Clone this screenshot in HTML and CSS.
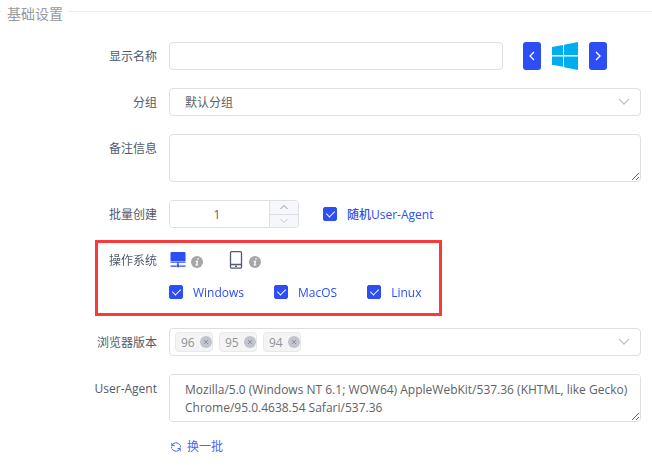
FILE: index.html
```html
<!DOCTYPE html>
<html lang="zh-CN">
<head>
    <meta charset="UTF-8">
    <meta name="viewport" content="width=device-width, initial-scale=1.0">
    <title>基础设置</title>
    <link rel="stylesheet" href="styles.css">
</head>
<body>
    <form>
        <fieldset class="panel">
            <legend>基础设置</legend>
            <div class="form-item">
                <label class="label" for="name">显示名称</label>
                <div class="content name-row">
                    <input class="input" id="name" type="text">
                    <div class="icon-picker">
                        <button class="btn" type="button" aria-label="上一个">
                            <svg width="8" height="12" viewBox="0 0 8 12"><path d="M6 2L2 6l4 4"/></svg>
                        </button>
                        <svg class="win-logo" width="26" height="28" viewBox="0 0 26 28">
                            <path d="M0 5l11-2v10H0zM12 2.800L26 0v13H12zM0 14.500h11v10.200L0 22.800zM12 14.500h14V28l-14-2.800z"/>
                        </svg>
                        <button class="btn" type="button" aria-label="下一个">
                            <svg width="8" height="12" viewBox="0 0 8 12"><path d="M2 2l4 4-4 4"/></svg>
                        </button>
                    </div>
                </div>
            </div>
            <div class="form-item">
                <label class="label" for="group">分组</label>
                <div class="content select">
                    <select class="input" id="group">
                        <option>默认分组</option>
                    </select>
                    <svg class="arrow" width="12" height="8" viewBox="0 0 12 8"><path d="M1 1l5 5 5-5"/></svg>
                </div>
            </div>
            <div class="form-item">
                <label class="label" for="remark">备注信息</label>
                <div class="content">
                    <textarea class="input textarea" id="remark"></textarea>
                </div>
            </div>
            <div class="form-item">
                <label class="label" for="count">批量创建</label>
                <div class="content count-row">
                    <div class="input number">
                        <input id="count" type="number" value="1">
                        <div class="steps">
                            <button type="button" aria-label="增加"><svg width="8" height="6" viewBox="0 0 8 6"><path d="M0.500 5L4 1.500 7.500 5"/></svg></button>
                            <button type="button" aria-label="减少" class="down"><svg width="8" height="6" viewBox="0 0 8 6"><path d="M0.500 1L4 4.500 7.500 1"/></svg></button>
                        </div>
                    </div>
                    <label class="check"><input type="checkbox" checked>随机User-Agent</label>
                </div>
            </div>
            <div class="form-item marked">
                <span class="label">操作系统</span>
                <div class="content">
                    <div class="devices">
                        <span class="device">
                            <svg class="pc" width="18" height="18" viewBox="0 0 18 18">
                                <path d="M2.500 1h13q1 0 1 1v8h-15V2q0-1 1-1zM1.500 10.500h15v1.200h-15zM8.300 11.700h1.400V14H8.300zM1.500 14.500H7v1.200H1.500zM11 14.500h5.500v1.200H11zM7.500 13.700h3v2.600h-3z"/>
                            </svg>
                            <svg class="info" width="12" height="12" viewBox="0 0 12 12">
                                <circle cx="6" cy="6" r="6"/>
                                <path d="M6.400 2.200h1.500l-.3 1.400H6.100zM4.600 4.700h2.600l-.8 3.700h.9l-.2 1H4.400l.2-1h.4l.6-2.700h-1.200z"/>
                            </svg>
                        </span>
                        <span class="device">
                            <svg class="phone" width="18" height="18" viewBox="0 0 18 18">
                                <rect x="3.500" y="0.700" width="11" height="16.500" rx="1.200"/>
                                <path d="M3.500 13.500h11M8 15.400h2"/>
                            </svg>
                            <svg class="info" width="12" height="12" viewBox="0 0 12 12">
                                <circle cx="6" cy="6" r="6"/>
                                <path d="M6.400 2.200h1.500l-.3 1.400H6.100zM4.600 4.700h2.600l-.8 3.700h.9l-.2 1H4.400l.2-1h.4l.6-2.700h-1.200z"/>
                            </svg>
                        </span>
                    </div>
                    <div class="checks">
                        <label class="check"><input type="checkbox" checked>Windows</label>
                        <label class="check"><input type="checkbox" checked>MacOS</label>
                        <label class="check"><input type="checkbox" checked>Linux</label>
                    </div>
                </div>
            </div>
            <div class="form-item">
                <span class="label">浏览器版本</span>
                <div class="content select">
                    <div class="input tags">
                        <span class="tag">96<button type="button" aria-label="删除 96"><svg width="6" height="6" viewBox="0 0 6 6"><path d="M1 1l4 4M5 1L1 5"/></svg></button></span>
                        <span class="tag">95<button type="button" aria-label="删除 95"><svg width="6" height="6" viewBox="0 0 6 6"><path d="M1 1l4 4M5 1L1 5"/></svg></button></span>
                        <span class="tag">94<button type="button" aria-label="删除 94"><svg width="6" height="6" viewBox="0 0 6 6"><path d="M1 1l4 4M5 1L1 5"/></svg></button></span>
                    </div>
                    <svg class="arrow" width="12" height="8" viewBox="0 0 12 8"><path d="M1 1l5 5 5-5"/></svg>
                </div>
            </div>
            <div class="form-item">
                <label class="label" for="ua">User-Agent</label>
                <div class="content">
                    <textarea class="input textarea" id="ua">Mozilla/5.0 (Windows NT 6.1; WOW64) AppleWebKit/537.36 (KHTML, like Gecko) Chrome/95.0.4638.54 Safari/537.36</textarea>
                    <button class="refresh" type="button">
                        <svg width="12" height="12" viewBox="0 0 12 12">
                            <path d="M2 4.500A4.300 4.300 0 0 1 9.800 4M10 7.500A4.300 4.300 0 0 1 2.200 8M1.800 1.800v2.700h2.700M10.200 10.200V7.500H7.500M10.300 4.500v2M1.700 7.500v-2"/>
                        </svg>
                        换一批
                    </button>
                </div>
            </div>
        </fieldset>
    </form>
</body>
</html>
```
FILE: styles.css
```css
* {
    box-sizing: border-box;
    margin: 0;
    padding: 0;
}
body {
    background: #fff;
    color: #606266;
    font-size: 12px;
    font-family: "Open Sans", "Noto Sans CJK SC", sans-serif;
}
input, select, textarea, button {
    color: inherit;
    font: inherit;
}
button {
    border: none;
    cursor: pointer;
}
svg {
    display: block;
    flex: none;
    fill: none;
    stroke: currentColor;
}
.panel {
    min-width: 0;
    border: none;
    border-top: 1px solid #ebeef5;
    padding: 19px 11px 0 0;
}
.panel legend {
    margin-left: 2px;
    padding: 5px 5px 0;
    color: #999;
    font-size: 14px;
    line-height: 18px;
}
.form-item {
    display: flex;
    margin-bottom: 18px;
}
.label {
    flex: none;
    width: 169px;
    padding: 2px 12px 0 0;
    color: #515a6e;
    line-height: 26px;
    text-align: right;
}
.content {
    flex: 1;
    min-width: 0;
}
.input {
    display: block;
    width: 100%;
    height: 28px;
    border: 1px solid #dcdfe6;
    border-radius: 4px;
    background: #fff;
    padding: 0 15px;
    outline: none;
}
.textarea {
    height: 48px;
    padding: 6px 5px 6px 15px;
    line-height: 18px;
    resize: vertical;
}
/* 显示名称 */
.name-row {
    display: flex;
    gap: 20px;
}
.name-row .input {
    flex: 1;
    min-width: 0;
}
.icon-picker {
    display: flex;
    gap: 11px;
    margin-right: 34px;
}
.btn {
    display: flex;
    align-items: center;
    justify-content: center;
    width: 18px;
    height: 28px;
    border-radius: 3px;
    background: #2d4ef5;
    color: #fff;
    stroke-width: 1.3;
}
.win-logo {
    fill: #00adef;
    stroke: none;
}
/* 下拉框 */
.select {
    position: relative;
}
.select select {
    appearance: none;
}
.arrow {
    position: absolute;
    top: 10px;
    right: 11px;
    color: #c0c4cc;
    stroke-width: 1.3;
    pointer-events: none;
}
/* 批量创建 */
.count-row {
    display: flex;
    gap: 24px;
}
.number {
    display: flex;
    width: 130px;
    padding: 0;
    overflow: hidden;
}
.number input {
    flex: 1;
    min-width: 0;
    border: none;
    outline: none;
    padding: 0 5px 0 0;
    text-align: center;
    appearance: textfield;
}
.number input::-webkit-inner-spin-button {
    display: none;
}
.steps {
    display: flex;
    flex-direction: column;
    width: 29px;
    border-left: 1px solid #dcdfe6;
}
.steps button {
    display: flex;
    flex: 1;
    align-items: center;
    justify-content: center;
    background: #f5f7fa;
    color: #909399;
}
.steps .down {
    border-top: 1px solid #dcdfe6;
    color: #c0c4cc;
}
/* 复选框 */
.check {
    display: flex;
    align-items: center;
    gap: 10px;
    color: #2d4ef5;
    font-weight: 500;
    cursor: pointer;
}
.check input {
    display: flex;
    justify-content: center;
    width: 14px;
    height: 14px;
    border: 1px solid #dcdfe6;
    border-radius: 2px;
    appearance: none;
}
.check input:checked {
    border-color: #2d4ef5;
    background: #2d4ef5;
}
.check input:checked::after {
    content: "";
    width: 4px;
    height: 7px;
    margin-top: 1px;
    border: solid #fff;
    border-width: 0 1px 1px 0;
    transform: rotate(45deg);
}
.checks {
    display: flex;
    gap: 30px;
    height: 36px;
}
/* 操作系统 */
.marked {
    position: relative;
}
.marked::after {
    content: "";
    position: absolute;
    top: -6px;
    bottom: -6px;
    left: 95px;
    box-sizing: border-box;
    width: 347px;
    border: 3px solid #f93a3a;
    pointer-events: none;
}
.devices {
    display: flex;
    gap: 24px;
    height: 28px;
}
.device {
    display: flex;
    align-items: center;
    gap: 4px;
}
.pc {
    fill: #2d4ef5;
    stroke: none;
}
.phone {
    color: #515a6e;
    stroke-width: 1.3;
}
.info {
    margin-top: 4px;
    stroke: none;
}
.info circle {
    fill: #a6a6a6;
}
.info path {
    fill: #fff;
}
/* 浏览器版本 */
.tags {
    display: flex;
    align-items: center;
    gap: 6px;
    padding: 0 5px;
}
.tag {
    display: flex;
    align-items: center;
    justify-content: space-between;
    width: 38px;
    height: 20px;
    border: 1px solid #e9e9eb;
    border-radius: 4px;
    background: #f4f4f5;
    padding: 0 0 0 5px;
    color: #909399;
}
.tag button {
    display: flex;
    align-items: center;
    justify-content: center;
    width: 12px;
    height: 12px;
    border-radius: 50%;
    background: #c0c4cc;
}
.refresh {
    display: flex;
    align-items: center;
    gap: 5px;
    margin-top: 10px;
    background: none;
    padding-left: 1px;
    color: #4b68f7;
    line-height: 30px;
}
```
